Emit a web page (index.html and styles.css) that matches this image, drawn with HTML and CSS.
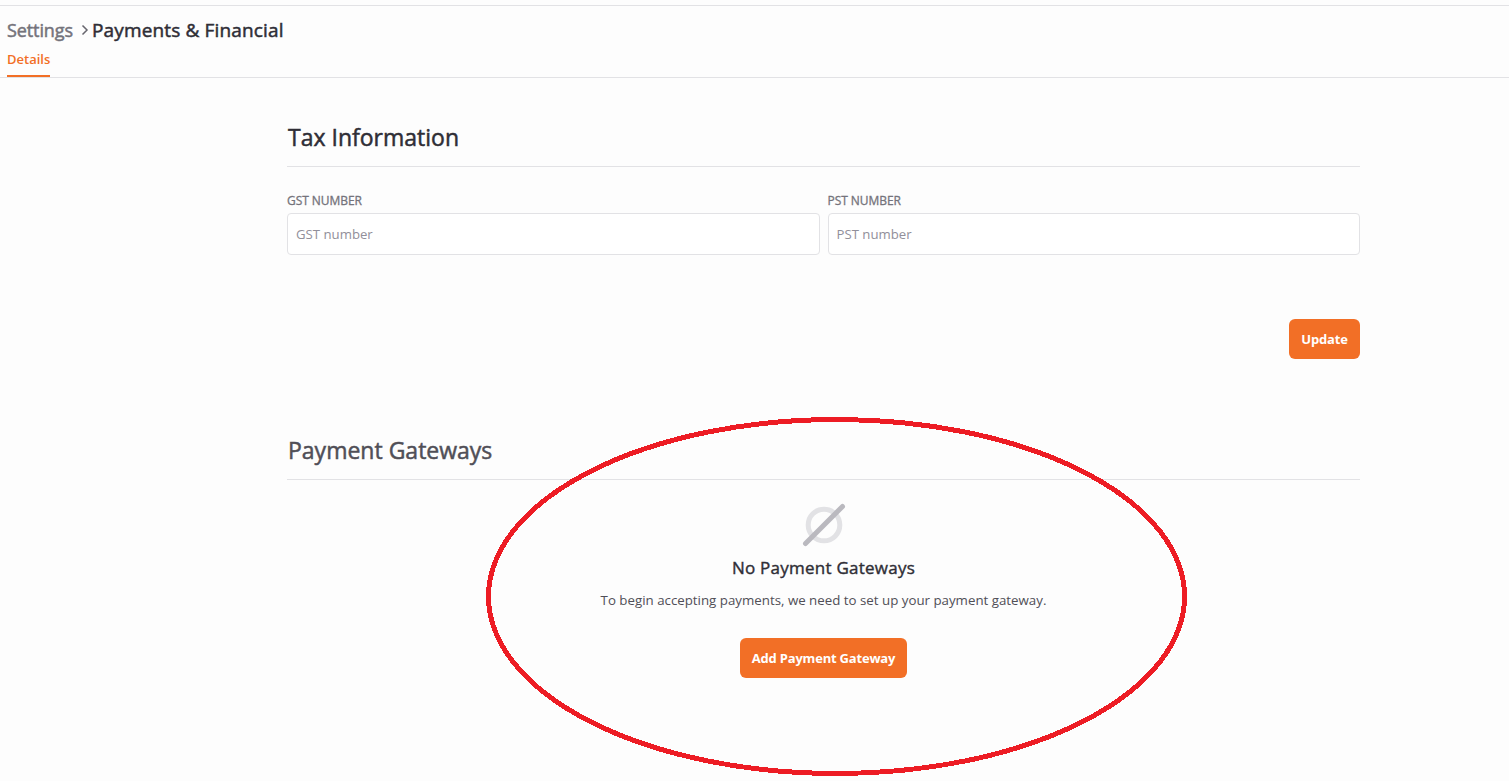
FILE: index.html
```html
<!DOCTYPE html>
<html lang="en">
<head>
    <meta charset="UTF-8">
    <meta name="viewport" content="width=device-width, initial-scale=1.0">
    <title>Payments &amp; Financial</title>
    <link rel="stylesheet" href="styles.css">
</head>
<body>
    <header class="header">
        <div class="breadcrumb">
            <a class="crumb">Settings</a>
            <svg class="chevron" width="8" height="12" viewBox="0 0 8 12">
                <path d="M1.5 1.5 L6 6 L1.5 10.5" fill="none" stroke="#67666e" stroke-width="1.5"/>
            </svg>
            <h1 class="page-title">Payments &amp; Financial</h1>
        </div>
        <nav class="tabs">
            <a class="tab active">Details</a>
        </nav>
    </header>
    <main class="content">
        <section class="tax">
            <h2 class="section-title">Tax Information</h2>
            <div class="fields">
                <div class="field">
                    <label class="label" for="gst">GST NUMBER</label>
                    <input class="input" type="text" id="gst" placeholder="GST number">
                </div>
                <div class="field">
                    <label class="label" for="pst">PST NUMBER</label>
                    <input class="input" type="text" id="pst" placeholder="PST number">
                </div>
            </div>
            <div class="actions">
                <button class="button update">Update</button>
            </div>
        </section>
        <section class="gateways">
            <h2 class="section-title muted">Payment Gateways</h2>
            <div class="empty">
                <svg class="empty-icon" width="44" height="44" viewBox="0 0 44 44">
                    <circle cx="22" cy="22" r="15.8" fill="none" stroke="#e2e2e5" stroke-width="5"/>
                    <path d="M3.5 40.5 L40.5 3.5" stroke="#bab9bf" stroke-width="5" stroke-linecap="round"/>
                </svg>
                <h3 class="empty-title">No Payment Gateways</h3>
                <p class="empty-text">To begin accepting payments, we need to set up your payment gateway.</p>
                <button class="button add">Add Payment Gateway</button>
            </div>
        </section>
    </main>
    <svg class="highlight" width="701" height="359" viewBox="0 0 701 359">
        <ellipse cx="350.5" cy="179.5" rx="348" ry="177" fill="none" stroke="#ed1c24" stroke-width="5"/>
    </svg>
</body>
</html>
```

FILE: styles.css
```css
*{
    box-sizing: border-box;
}
body{
    margin: 0;
    height: 781px;
    overflow: hidden;
    position: relative;
    padding-top: 5px;
    background-color: #fdfdfd;
    font-family: "Open Sans", "Noto Sans", sans-serif;
    color: #2f2e36;
}
h1, h2, h3, p{
    margin: 0;
}
.header{
    height: 73px;
    padding: 12px 7px 0;
    border-top: 1px solid #e2e2e5;
    border-bottom: 1px solid #e2e2e5;
}
.breadcrumb{
    display: flex;
    align-items: center;
    height: 24px;
    white-space: nowrap;
}
.crumb{
    width: 66px;
    font-size: 18px;
    font-weight: 500;
    letter-spacing: -0.1px;
    -webkit-text-stroke: 0.5px;
    color: #74737b;
}
.chevron{
    margin: 0 3px 0 8px;
}
.page-title{
    font-size: 19px;
    font-weight: 500;
    letter-spacing: 0.15px;
    -webkit-text-stroke: 0.5px;
}
.tabs{
    display: flex;
    height: 35px;
}
.tab{
    padding-top: 8px;
    font-size: 13px;
    font-weight: 600;
    line-height: 19px;
}
.active{
    color: #f26f26;
    border-bottom: 2px solid #f26f26;
}
.content{
    width: 1073px;
    margin-left: 287px;
    padding-top: 42px;
}
.section-title{
    height: 47px;
    padding-left: 1px;
    font-size: 23px;
    font-weight: 500;
    line-height: 35px;
    -webkit-text-stroke: 0.5px;
    border-bottom: 1px solid #e2e2e5;
}
.muted{
    color: #504f57;
}
.fields{
    display: grid;
    grid-template-columns: 1fr 1fr;
    gap: 8px;
    padding-top: 25px;
}
.field{
    display: flex;
    flex-direction: column;
}
.label{
    height: 21px;
    font-size: 12px;
    font-weight: 500;
    line-height: 18px;
    letter-spacing: -0.05px;
    -webkit-text-stroke: 0.3px;
    color: #74737b;
}
.input{
    width: 100%;
    height: 42px;
    padding: 0 8px 1px;
    border: 1px solid #e2e2e5;
    border-radius: 4px;
    background-color: white;
    font-family: inherit;
    font-size: 13.2px;
}
.input::placeholder{
    color: #918f9a;
}
.actions{
    display: flex;
    justify-content: flex-end;
    padding-top: 64px;
}
.button{
    height: 40px;
    padding: 0;
    border: none;
    border-radius: 6px;
    background-color: #f26f26;
    color: white;
    font-family: inherit;
    font-size: 13px;
    font-weight: 700;
    letter-spacing: -0.2px;
    white-space: nowrap;
}
.update{
    width: 71px;
}
.gateways{
    padding-top: 74px;
}
.empty{
    display: flex;
    flex-direction: column;
    align-items: center;
    padding-top: 23px;
}
.empty-title{
    margin-top: 8px;
    font-size: 17px;
    font-weight: 500;
    line-height: 26px;
    letter-spacing: 0.25px;
    -webkit-text-stroke: 0.4px;
}
.empty-text{
    margin-top: 9px;
    font-size: 13.3px;
    line-height: 20px;
    color: #504f57;
}
.add{
    width: 167px;
    margin-top: 28px;
}
.highlight{
    position: absolute;
    left: 486px;
    top: 417px;
    pointer-events: none;
    shape-rendering: crispEdges;
}
```
